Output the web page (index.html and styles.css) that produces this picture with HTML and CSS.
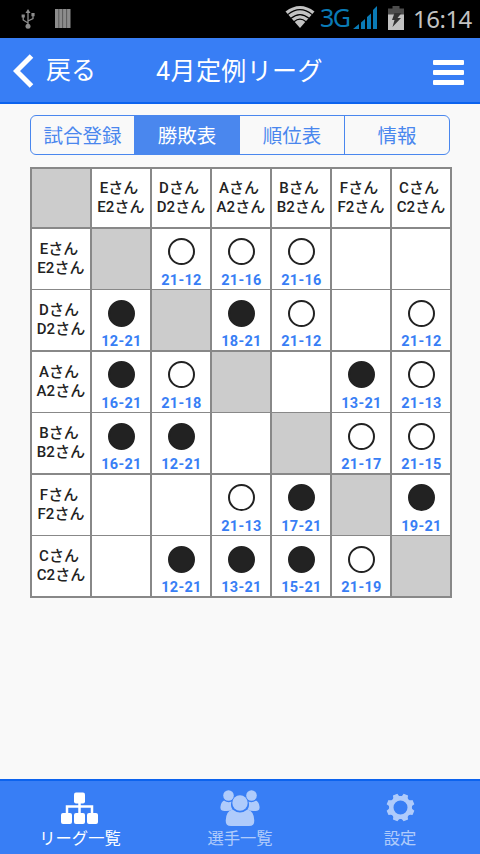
FILE: index.html
```
<!DOCTYPE html>
<html lang="ja">
<head>
    <meta charset="utf-8">
    <title>4月定例リーグ</title>
    <link rel="stylesheet" href="styles.css">
</head>
<body>

<!-- Status bar -->
<div class="statusbar">
    <svg class="usb" width="14" height="20" viewBox="0 0 14 20">
        <path d="M7 3v14M7 14L2.200 11V7M7 12l5-2.500V5" fill="none" stroke="#8c8c8c" stroke-width="1.300"/>
        <path d="M7 0l2.500 4h-5zM.6 5.500h3.200v3H.6zM10.400 4h3.200v3.200h-3.200z" fill="#8c8c8c"/>
        <circle cx="7" cy="17.300" r="2.500" fill="#8c8c8c"/>
    </svg>
    <svg class="bars" width="16" height="19" viewBox="0 0 16 19">
        <path d="M0 0h15.500v19H0z" fill="#8c8c8c"/>
        <path d="M3.800 0v19M7.600 0v19M11.600 0v19" stroke="#4c4c4c" stroke-width=".8"/>
    </svg>
    <svg class="wifi" width="30" height="22" viewBox="0 0 30 22">
        <path d="M15 22L.5 5.500Q15-5.500 29.500 5.500z" fill="#c2c2c2"/>
        <path d="M2.800 8.600Q15-1.200 27.200 8.600M6 12.300Q15 4.800 24 12.300M9 15.800Q15 10.500 21 15.800" fill="none" stroke="#000" stroke-width="1.200"/>
    </svg>
    <span class="network">3G</span>
    <svg class="signal" width="24" height="23" viewBox="0 0 24 23">
        <path d="M0 23l6-5v5zM8 16.500l4-3.500v10H8zM14 11l4-3.500V23h-4zM20 4l4-4v23h-4z" fill="#0a7ab5"/>
    </svg>
    <svg class="battery" width="16" height="24" viewBox="0 0 16 24">
        <path d="M4.500 0h7v2.500H16V9H0V2.500h4.500z" fill="#4d4d4d"/>
        <path d="M0 8.500h16V24H0z" fill="#c2c2c2"/>
        <path d="M6.500 7h7l-4 5H13L4.500 21l2-7H4z" fill="#333"/>
    </svg>
    <span class="clock">16:14</span>
</div>

<!-- Header -->
<div class="header">
    <a class="back" href="#">
        <svg width="21" height="34" viewBox="0 0 21 34">
            <path d="M18.500 2L3.500 17l15 15" fill="none" stroke="#fff" stroke-width="5"/>
        </svg>
        <span>戻る</span>
    </a>
    <h1>4月定例リーグ</h1>
    <div class="menu"><i></i><i></i><i></i></div>
</div>

<!-- Tabs -->
<div class="tabs">
    <a href="#">試合登録</a>
    <a class="active" href="#">勝敗表</a>
    <a href="#">順位表</a>
    <a href="#">情報</a>
</div>

<!-- Result table -->
<table class="results">
    <tr>
        <th class="none"></th>
        <th>Eさん&nbsp;<br>E2さん</th>
        <th>Dさん&nbsp;<br>D2さん</th>
        <th>Aさん&nbsp;<br>A2さん</th>
        <th>Bさん&nbsp;<br>B2さん</th>
        <th>Fさん&nbsp;<br>F2さん</th>
        <th>Cさん&nbsp;<br>C2さん</th>
    </tr>
    <tr>
        <th>Eさん&nbsp;<br>E2さん</th>
        <td class="none"></td>
        <td><i class="win"></i><b>21-12</b></td>
        <td><i class="win"></i><b>21-16</b></td>
        <td><i class="win"></i><b>21-16</b></td>
        <td></td>
        <td></td>
    </tr>
    <tr>
        <th>Dさん&nbsp;<br>D2さん</th>
        <td><i class="lose"></i><b>12-21</b></td>
        <td class="none"></td>
        <td><i class="lose"></i><b>18-21</b></td>
        <td><i class="win"></i><b>21-12</b></td>
        <td></td>
        <td><i class="win"></i><b>21-12</b></td>
    </tr>
    <tr>
        <th>Aさん&nbsp;<br>A2さん</th>
        <td><i class="lose"></i><b>16-21</b></td>
        <td><i class="win"></i><b>21-18</b></td>
        <td class="none"></td>
        <td></td>
        <td><i class="lose"></i><b>13-21</b></td>
        <td><i class="win"></i><b>21-13</b></td>
    </tr>
    <tr>
        <th>Bさん&nbsp;<br>B2さん</th>
        <td><i class="lose"></i><b>16-21</b></td>
        <td><i class="lose"></i><b>12-21</b></td>
        <td></td>
        <td class="none"></td>
        <td><i class="win"></i><b>21-17</b></td>
        <td><i class="win"></i><b>21-15</b></td>
    </tr>
    <tr>
        <th>Fさん&nbsp;<br>F2さん</th>
        <td></td>
        <td></td>
        <td><i class="win"></i><b>21-13</b></td>
        <td><i class="lose"></i><b>17-21</b></td>
        <td class="none"></td>
        <td><i class="lose"></i><b>19-21</b></td>
    </tr>
    <tr>
        <th>Cさん&nbsp;<br>C2さん</th>
        <td></td>
        <td><i class="lose"></i><b>12-21</b></td>
        <td><i class="lose"></i><b>13-21</b></td>
        <td><i class="lose"></i><b>15-21</b></td>
        <td><i class="win"></i><b>21-19</b></td>
        <td class="none"></td>
    </tr>
</table>

<!-- Bottom navigation -->
<div class="footer">
    <a class="active" href="#">
        <svg width="40" height="38" viewBox="0 0 40 38">
            <path d="M19.500 12v12M7 24v-6.500h25V24" fill="none" stroke="#fff" stroke-width="2.500"/>
            <g fill="#fff">
                <rect x="14" y="3.500" width="11" height="11" rx="2"/>
                <rect x="1" y="24" width="11" height="11" rx="2"/>
                <rect x="14" y="24" width="11" height="11" rx="2"/>
                <rect x="27" y="24" width="11" height="11" rx="2"/>
            </g>
        </svg>
        <span>リーグ一覧</span>
    </a>
    <a href="#">
        <svg width="40" height="38" viewBox="0 0 40 38">
            <g fill="#fff">
                <circle cx="8.500" cy="6.500" r="5.300"/>
                <circle cx="31.500" cy="6.500" r="5.300"/>
                <path d="M4 11.500Q8 14.500 11.500 12.500 10 17 12.500 20.500 8 23 2 21.500 0 21 .5 17.500 1 13 4 11.500zM36 11.500Q32 14.500 28.500 12.500 30 17 27.500 20.500 32 23 38 21.500 40 21 39.500 17.500 39 13 36 11.500z"/>
                <circle cx="20" cy="14" r="7.700"/>
                <path d="M12.500 20.500Q20 26.500 27.500 20.500 34 22 34.300 31.500 34.500 37 29 37H11Q5.500 37 5.700 31.500 6 22 12.500 20.500z"/>
            </g>
        </svg>
        <span>選手一覧</span>
    </a>
    <a href="#">
        <svg width="40" height="38" viewBox="0 0 40 38">
            <g transform="translate(20.500 18.500)">
                <circle r="9.200" fill="none" stroke="#fff" stroke-width="4.400"/>
                <g fill="#fff">
                    <path id="tooth" d="M-4.300-10q1.600-1 1.900-4h4.800q.3 3 1.900 4z" transform="rotate(22.500)"/>
                    <use href="#tooth" transform="rotate(45)"/>
                    <use href="#tooth" transform="rotate(90)"/>
                    <use href="#tooth" transform="rotate(135)"/>
                    <use href="#tooth" transform="rotate(180)"/>
                    <use href="#tooth" transform="rotate(225)"/>
                    <use href="#tooth" transform="rotate(270)"/>
                    <use href="#tooth" transform="rotate(315)"/>
                </g>
            </g>
        </svg>
        <span>設定</span>
    </a>
</div>

</body>
</html>
```
FILE: styles.css
```
* {
    box-sizing: border-box;
}

body {
    font-family: Roboto, "Noto Sans CJK JP", sans-serif;
    margin: 0;
    height: 854px;
    display: flex;
    flex-direction: column;
    background-color: #f9f9f9;
    overflow: hidden;
}

a {
    text-decoration: none;
}

/* Status bar */
.statusbar {
    height: 38px;
    display: flex;
    align-items: flex-start;
    padding-left: 21px;
    background-color: #000;
}

.usb {
    margin-top: 9px;
}

.bars {
    margin: 9px 0 0 20px;
}

.wifi {
    margin: 6px 0 0 214px;
}

.network {
    width: 28px;
    margin: 1px 0 0 5px;
    font-family: "Noto Sans", sans-serif;
    font-size: 25px;
    line-height: 32px;
    letter-spacing: -1.5px;
    color: #0a7ab5;
}

.signal {
    margin: 6px 0 0 5px;
}

.battery {
    margin: 6px 0 0 11px;
}

.clock {
    margin: 3px 0 0 9px;
    font-family: "Noto Sans", sans-serif;
    font-size: 24px;
    line-height: 32px;
    letter-spacing: -0.5px;
    color: #c2c2c2;
}

/* Header */
.header {
    height: 66px;
    display: grid;
    grid-template-columns: 120px 1fr 120px;
    align-items: center;
    background-color: #387ef5;
    border-bottom: 2px solid #0c63ee;
    color: #fff;
}

.back {
    display: flex;
    align-items: center;
    gap: 12px;
    padding-left: 13px;
    padding-top: 2px;
    color: #fff;
    font-size: 25px;
    line-height: 34px;
}

.header h1 {
    margin: 0 0 0 -1px;
    padding-top: 3px;
    font-size: 25px;
    line-height: 34px;
    letter-spacing: 0.4px;
    font-weight: normal;
    text-align: center;
    white-space: nowrap;
}

.menu {
    justify-self: end;
    width: 31px;
    margin: 4px 16px 0 0;
    display: flex;
    flex-direction: column;
    gap: 5px;
}

.menu i {
    height: 5px;
    border-radius: 1px;
    background-color: #fff;
}

/* Tabs */
.tabs {
    display: grid;
    grid-template-columns: 103px 105px 105px 105px;
    width: 420px;
    height: 40px;
    margin: 11px 0 12px 30px;
    border: 1px solid #4a87ee;
    border-radius: 6px;
    overflow: hidden;
}

.tabs a {
    font-size: 19.5px;
    line-height: 41px;
    text-align: center;
    color: #4a87ee;
    border-left: 1px solid #4a87ee;
}

.tabs a:first-child {
    border-left: none;
}

.tabs a.active {
    background-color: #4a87ee;
    color: #fff;
}

/* Result table */
.results {
    width: 422px;
    margin-left: 30px;
    table-layout: fixed;
    border-collapse: separate;
    border-spacing: 0;
    border-left: 2px solid #888;
    border-top: 2px solid #888;
    background-color: #fff;
    color: #222;
}

.results th,
.results td {
    height: 62px;
    padding: 0;
    border-right: 2px solid #888;
    border-bottom: 2px solid #888;
    text-align: center;
}

.results tr:nth-child(even) > * {
    height: 61px;
    border-bottom-width: 1px;
}

.results tr:first-child > * {
    height: 60px;
}

.results th {
    font-size: 15px;
    line-height: 19px;
    letter-spacing: 0.1px;
    font-weight: 500;
}

.results td {
    vertical-align: top;
}

.results .none {
    background-color: #ccc;
}

.win,
.lose {
    display: block;
    width: 27px;
    height: 27px;
    margin: 9px auto 0 16px;
    border: 2px solid #222;
    border-radius: 50%;
}

.lose {
    background-color: #222;
}

.results b {
    display: block;
    margin-top: 8px;
    padding-left: 1px;
    font-size: 14.5px;
    line-height: 16px;
    letter-spacing: 0.3px;
    font-weight: bold;
    color: #387ef5;
}

.results tr:nth-child(odd) i {
    margin-top: 10px;
}

.results tr:nth-child(odd) b {
    margin-top: 7px;
}

/* Bottom navigation */
.footer {
    height: 75px;
    margin-top: auto;
    display: flex;
    background-color: #387ef5;
    border-top: 2px solid #0c63ee;
}

.footer a {
    flex: 1;
    display: flex;
    flex-direction: column;
    align-items: center;
    padding-top: 8px;
    color: #fff;
    opacity: 0.6;
}

.footer a.active {
    opacity: 1;
}

.footer span {
    margin-top: 1px;
    font-size: 16.3px;
    line-height: 22px;
}
```
